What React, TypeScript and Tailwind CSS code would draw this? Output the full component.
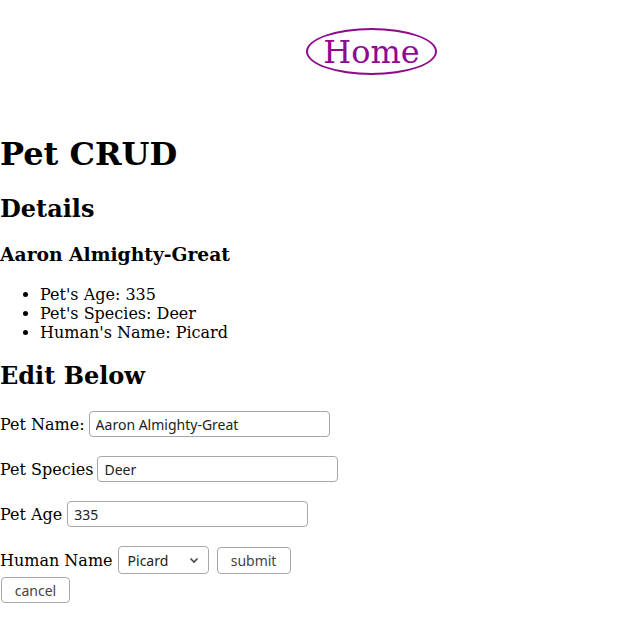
import React from "react";

const ctl = "font-['Noto_Sans','Open_Sans',sans-serif] text-[14px] text-[#222]";

export default function App() {
  return (
    <div className="min-h-[621px] w-[621px] bg-white text-black font-['DejaVu_Serif',serif] text-[16px] leading-[normal]">
      <div className="h-[113.5px] pt-[28px] flex justify-center pl-[122px]">
        <a className="flex items-center justify-center w-[131px] h-[47px] rounded-[50%] border-2 border-[#8e0b8e] text-[#8e0b8e] text-[32px] leading-none">
          Home
        </a>
      </div>
      <h1 className="text-[32px] font-bold my-[21.44px] leading-[normal]">Pet CRUD</h1>
      <h2 className="text-[24px] font-bold my-[19.92px] leading-[normal]">Details</h2>
      <h3 className="text-[18.72px] font-bold mt-[18.72px] mb-[19.72px] leading-[normal]">Aaron Almighty-Great</h3>
      <ul className="list-disc pl-[40px] mt-4 mb-[14px]">
        <li>Pet's Age: 335</li>
        <li>Pet's Species: Deer</li>
        <li>Human's Name: Picard</li>
      </ul>
      <h2 className="text-[24px] font-bold mt-[18.92px] mb-[19.92px] leading-[normal]">Edit Below</h2>
      <div className="flex items-center h-[29px] mb-4">
        <span>Pet Name:</span>
        <input
          readOnly
          value="Aaron Almighty-Great"
          className={`${ctl} ml-[4px] w-[241px] h-[26px] border border-[#a8a8a8] rounded-[4px] px-[6px] bg-white`}
        />
      </div>
      <div className="flex items-center h-[29px] mb-4">
        <span>Pet Species</span>
        <input
          readOnly
          value="Deer"
          className={`${ctl} ml-[4px] w-[241px] h-[26px] border border-[#a8a8a8] rounded-[4px] px-[6px] bg-white`}
        />
      </div>
      <div className="flex items-center h-[29px] mb-[17px]">
        <span>Pet Age</span>
        <input
          readOnly
          value="335"
          className={`${ctl} ml-[5px] w-[241px] h-[26px] border border-[#a8a8a8] rounded-[4px] px-[6px] bg-white`}
        />
      </div>
      <div className="flex items-center h-[29px]">
        <span>Human Name</span>
        <div className={`${ctl} ml-[5px] w-[91px] h-[28px] border border-[#a8a8a8] rounded-[4px] pl-[9px] pr-[8px] flex items-center justify-between bg-white`}>
          <span>Picard</span>
          <svg width="10" height="7" viewBox="0 0 10 7" className="mr-[1px]">
            <path d="M1.5 1.5 L5 5 L8.5 1.5" fill="none" stroke="#444" strokeWidth="1.6" />
          </svg>
        </div>
        <button className={`${ctl} ml-[8px] w-[74px] h-[27px] border border-[#a8a8a8] rounded-[4px] bg-white text-[#444]`}>
          submit
        </button>
      </div>
      <div className="pt-[2.5px] pl-[1px]">
        <button className={`${ctl} w-[69px] h-[26px] border border-[#a8a8a8] rounded-[4px] bg-white text-[#444]`}>
          cancel
        </button>
      </div>
    </div>
  );
}
